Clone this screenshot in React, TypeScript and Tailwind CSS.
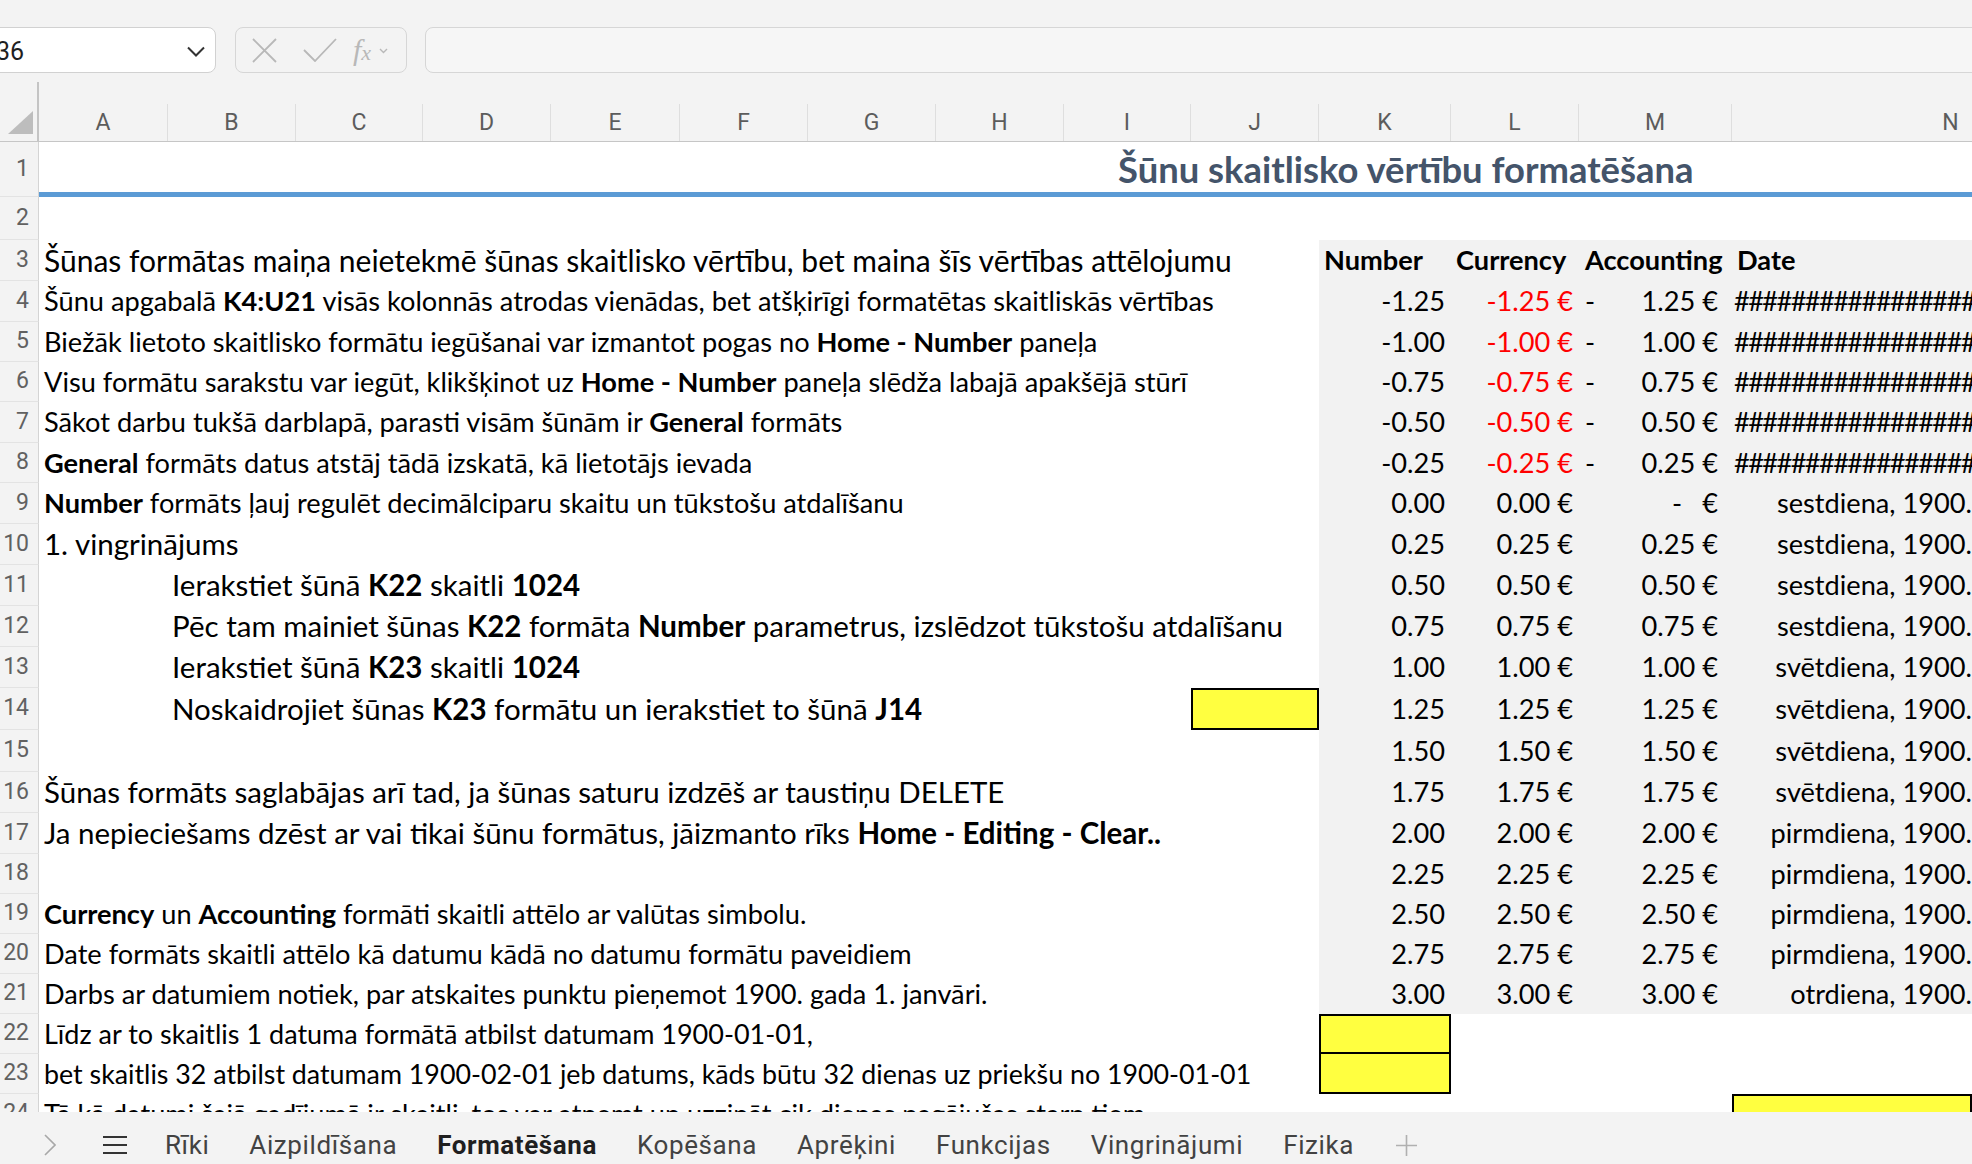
import React from "react"

type Seg = { t: string; b?: boolean }
const T = (t: string): Seg => ({ t })
const B = (t: string): Seg => ({ t, b: true })

// column widths A..J (text area), K..N (data block)
const cols = [
  { l: "A", w: "w-[129px]" },
  { l: "B", w: "w-[128px]" },
  { l: "C", w: "w-[127px]" },
  { l: "D", w: "w-[128px]" },
  { l: "E", w: "w-[129px]" },
  { l: "F", w: "w-[128px]" },
  { l: "G", w: "w-[128px]" },
  { l: "H", w: "w-[128px]" },
  { l: "I", w: "w-[127px]" },
  { l: "J", w: "w-[128px]" },
  { l: "K", w: "w-[132px]" },
  { l: "L", w: "w-[128px]" },
  { l: "M", w: "w-[153px]" },
  { l: "N", w: "w-[438px]" },
]

const heights: Record<number, string> = {
  1: "h-[55px]",
  2: "h-[43px]",
  3: "h-[41px]",
  4: "h-[41px]",
  5: "h-[40px]",
  6: "h-[40px]",
  7: "h-[41px]",
  8: "h-[40px]",
  9: "h-[41px]",
  10: "h-[41px]",
  11: "h-[41px]",
  12: "h-[41px]",
  13: "h-[41px]",
  14: "h-[42px]",
  15: "h-[42px]",
  16: "h-[41px]",
  17: "h-[41px]",
  18: "h-[40px]",
  19: "h-[40px]",
  20: "h-[40px]",
  21: "h-[40px]",
  22: "h-[40px]",
  23: "h-[40px]",
  24: "h-[40px]",
}

const BIG = "text-[29.5px]"

const textRows: Record<number, { segs: Seg[]; size?: string; indent?: boolean }> = {
  3: { segs: [T("Šūnas formātas maiņa neietekmē šūnas skaitlisko vērtību, bet maina šīs vērtības attēlojumu")], size: "text-[30px]" },
  4: { segs: [T("Šūnu apgabalā "), B("K4:U21"), T(" visās kolonnās atrodas vienādas, bet atšķirīgi formatētas skaitliskās vērtības")] },
  5: { segs: [T("Biežāk lietoto skaitlisko formātu iegūšanai var izmantot pogas no "), B("Home - Number"), T(" paneļa")] },
  6: { segs: [T("Visu formātu sarakstu var iegūt, klikšķinot uz "), B("Home - Number"), T(" paneļa slēdža labajā apakšējā stūrī")] },
  7: { segs: [T("Sākot darbu tukšā darblapā, parasti visām šūnām ir "), B("General"), T(" formāts")] },
  8: { segs: [B("General"), T(" formāts datus atstāj tādā izskatā, kā lietotājs ievada")] },
  9: { segs: [B("Number"), T(" formāts ļauj regulēt decimālciparu skaitu un tūkstošu atdalīšanu")] },
  10: { segs: [T("1. vingrinājums")], size: BIG },
  11: { segs: [T("Ierakstiet šūnā "), B("K22"), T(" skaitli "), B("1024")], size: BIG, indent: true },
  12: { segs: [T("Pēc tam mainiet šūnas "), B("K22"), T(" formāta "), B("Number"), T(" parametrus, izslēdzot tūkstošu atdalīšanu")], size: BIG, indent: true },
  13: { segs: [T("Ierakstiet šūnā "), B("K23"), T(" skaitli "), B("1024")], size: BIG, indent: true },
  14: { segs: [T("Noskaidrojiet šūnas "), B("K23"), T(" formātu un ierakstiet to šūnā "), B("J14")], size: BIG, indent: true },
  16: { segs: [T("Šūnas formāts saglabājas arī tad, ja šūnas saturu izdzēš ar taustiņu DELETE")], size: BIG },
  17: { segs: [T("Ja nepieciešams dzēst ar vai tikai šūnu formātus, jāizmanto rīks "), B("Home - Editing - Clear..")], size: BIG },
  19: { segs: [B("Currency"), T(" un "), B("Accounting"), T(" formāti skaitli attēlo ar valūtas simbolu.")] },
  20: { segs: [T("Date formāts skaitli attēlo kā datumu kādā no datumu formātu paveidiem")] },
  21: { segs: [T("Darbs ar datumiem notiek, par atskaites punktu pieņemot 1900. gada 1. janvāri.")] },
  22: { segs: [T("Līdz ar to skaitlis 1 datuma formātā atbilst datumam 1900-01-01,")], size: "text-[27px]" },
  23: { segs: [T("bet skaitlis 32 atbilst datumam 1900-02-01 jeb datums, kāds būtu 32 dienas uz priekšu no 1900-01-01")], size: "text-[26.8px]" },
  24: { segs: [T("Tā kā datumi šajā gadījumā ir skaitļi, tos var atņemt un uzzināt cik dienas pagājušas starp tiem")] },
}

const weekdays = ["sestdiena", "svētdiena", "pirmdiena", "otrdiena"]

function DataCells({ n }: { n: number }) {
  const gray = "bg-[#f2f2f2]"
  if (n === 3) {
    return (
      <>
        <div className={`w-[132px] shrink-0 ${gray} font-bold pl-[5px] flex items-center`}>Number</div>
        <div className={`w-[128px] shrink-0 ${gray} font-bold pl-[5px] flex items-center`}>Currency</div>
        <div className={`w-[153px] shrink-0 ${gray} font-bold pl-[6px] flex items-center`}>Accounting</div>
        <div className={`w-[240px] shrink-0 ${gray} font-bold pl-[5px] flex items-center`}>Date</div>
      </>
    )
  }
  if (n >= 4 && n <= 21) {
    const v = -1.25 + (n - 4) * 0.25
    const abs = Math.abs(v).toFixed(2)
    return (
      <>
        <div className={`w-[132px] shrink-0 ${gray} pr-[6px] flex items-center justify-end`}>{v.toFixed(2)}</div>
        <div className={`w-[128px] shrink-0 ${gray} pr-[6px] flex items-center justify-end ${v < 0 ? "text-[#ff0000]" : ""}`}>
          {v.toFixed(2)} €
        </div>
        <div className={`w-[153px] shrink-0 ${gray} pl-[6px] pr-[14px] flex items-center justify-between`}>
          <span>{v < 0 ? "-" : ""}</span>
          {v === 0 ? (
            <span>
              -<span className="ml-[20px]">€</span>
            </span>
          ) : (
            <span>{abs} €</span>
          )}
        </div>
        <div
          className={`w-[240px] shrink-0 ${gray} flex items-center overflow-hidden ${
            v < 0 ? "pl-[2px] justify-start tracking-[-1.6px]" : "justify-end"
          }`}
        >
          {v < 0 ? "#".repeat(30) : `${weekdays[Math.floor(v)]}, 1900.`}
        </div>
      </>
    )
  }
  return (
    <>
      <div
        className={`w-[132px] shrink-0 ${
          n === 22 ? "bg-[#ffff40] border-2 border-black" : n === 23 ? "bg-[#ffff40] border-2 border-t-0 border-black" : ""
        }`}
      />
      <div className="w-[128px] shrink-0" />
      <div className="w-[153px] shrink-0" />
      <div className={`w-[240px] shrink-0 ${n === 24 ? "bg-[#ffff40] border-2 border-black" : ""}`} />
    </>
  )
}

function SheetRow({ n }: { n: number }) {
  const tr = textRows[n]
  return (
    <div className={`flex shrink-0 ${heights[n]}`}>
      <div className="w-[39px] shrink-0 bg-[#f3f3f3] border-r border-b border-r-[#d4d4d4] border-b-[#e3e3e3] flex items-center justify-end pr-[9px] font-['Roboto',sans-serif] text-[23px] text-[#616161] overflow-hidden">
        {n}
      </div>
      {n === 1 ? (
        <div className="flex-1 border-b-[5px] border-[#5b9bd5] flex items-center pt-[5px] pl-[1079px] font-['Lato',sans-serif] font-bold text-[36.4px] text-[#44546a] whitespace-pre">
          Šūnu skaitlisko vērtību formatēšana
        </div>
      ) : (
        <div className="flex font-['Lato',sans-serif] text-[27.2px] text-black whitespace-pre">
          <div className="w-[1280px] shrink-0 flex">
            <div className={`flex-1 flex items-center ${tr?.indent ? "pl-[133px]" : "pl-[5px]"} ${tr?.size ?? ""}`}>
              {tr?.segs.map((s, i) => (
                <span key={i} className={s.b ? "font-bold" : ""}>
                  {s.t}
                </span>
              ))}
            </div>
            {n === 14 && <div className="w-[128px] shrink-0 bg-[#ffff40] border-2 border-black" />}
          </div>
          <DataCells n={n} />
        </div>
      )}
    </div>
  )
}

function Toolbar() {
  return (
    <div className="h-[82px] shrink-0 bg-[#f3f3f3] flex items-start pt-[27px] overflow-hidden">
      {/* name box */}
      <div className="-ml-[8px] w-[224px] h-[46px] shrink-0 bg-white border border-[#d1d1d1] rounded-[8px] flex items-center justify-between pl-[3px] pr-[10px] pt-[3px] font-['Roboto',sans-serif] text-[25px] text-[#1f1f1f]">
        <span>36</span>
        <svg width="18" height="11" viewBox="0 0 18 11" fill="none" stroke="#333" strokeWidth="2">
          <path d="M1 1.5 L9 9.5 L17 1.5" />
        </svg>
      </div>
      {/* cancel / enter / fx */}
      <div className="ml-[19px] w-[172px] h-[46px] shrink-0 border border-[#d6d6d6] rounded-[8px] flex items-center pl-[16px] text-[#b8b8b8]">
        <svg width="25" height="25" viewBox="0 0 25 25" fill="none" stroke="#b8b8b8" strokeWidth="1.8">
          <path d="M1 1 L24 24 M24 1 L1 24" />
        </svg>
        <svg className="ml-[26px]" width="34" height="24" viewBox="0 0 34 24" fill="none" stroke="#b8b8b8" strokeWidth="1.8">
          <path d="M1 12 L12 23 L33 1" />
        </svg>
        <span className="ml-[16px] font-['Liberation_Serif',serif] italic text-[30px] leading-none">
          f<span className="text-[22px]">x</span>
        </span>
        <svg className="ml-[8px] mt-[2px]" width="9" height="6" viewBox="0 0 9 6" fill="none" stroke="#b8b8b8" strokeWidth="1.4">
          <path d="M1 1 L4.5 4.5 L8 1" />
        </svg>
      </div>
      {/* formula input */}
      <div className="ml-[18px] flex-1 -mr-[12px] h-[46px] bg-[#f6f6f6] border border-[#d6d6d6] rounded-[8px]" />
    </div>
  )
}

function ColumnHeader() {
  return (
    <div className="h-[60px] shrink-0 flex bg-[#f3f3f3] border-b border-[#c6c6c6] overflow-hidden">
      <div className="w-[39px] shrink-0 border-r-2 border-[#c4c4c4] flex items-end justify-end pr-[4px] pb-[7px]">
        <svg width="25" height="23" viewBox="0 0 25 23">
          <polygon points="25,0 25,23 0,23" fill="#bdbdbd" />
        </svg>
      </div>
      {cols.map((c) => (
        <div key={c.l} className={`${c.w} shrink-0 flex items-end`}>
          <div className="h-[37px] w-full border-r border-[#dedede] flex items-center justify-center pt-[2px] font-['Roboto',sans-serif] text-[23px] text-[#5c5c5c]">
            {c.l}
          </div>
        </div>
      ))}
    </div>
  )
}

const tabs = ["Rīki", "Aizpildīšana", "Formatēšana", "Kopēšana", "Aprēķini", "Funkcijas", "Vingrinājumi", "Fizika"]

function SheetTabs() {
  return (
    <div className="h-[52px] shrink-0 bg-[#f3f3f3] flex items-center pt-[14px] font-['Roboto',sans-serif] text-[26px] tracking-[0.6px] text-[#424242]">
      <svg className="ml-[44px]" width="12" height="22" viewBox="0 0 12 22" fill="none" stroke="#a8a8a8" strokeWidth="1.6">
        <path d="M1 1 L11 11 L1 21" />
      </svg>
      <svg className="ml-[47px]" width="24" height="18" viewBox="0 0 24 18" fill="none" stroke="#333" strokeWidth="2">
        <path d="M0 1 H24 M0 9 H24 M0 17 H24" />
      </svg>
      <div className="ml-[18px] flex">
        {tabs.map((t) => (
          <div key={t} className={`px-[20px] ${t === "Formatēšana" ? "font-bold text-[#1f1f1f]" : ""}`}>
            {t}
          </div>
        ))}
      </div>
      <svg className="ml-[22px]" width="21" height="21" viewBox="0 0 21 21" fill="none" stroke="#b0b0b0" strokeWidth="1.6">
        <path d="M10.5 0 V21 M0 10.5 H21" />
      </svg>
    </div>
  )
}

export default function App() {
  const rows = Array.from({ length: 24 }, (_, i) => i + 1)
  return (
    <div className="w-[1972px] h-[1164px] overflow-hidden bg-white flex flex-col">
      <Toolbar />
      <ColumnHeader />
      <div className="flex-1 overflow-hidden flex flex-col">
        {rows.map((n) => (
          <SheetRow key={n} n={n} />
        ))}
      </div>
      <SheetTabs />
    </div>
  )
}
